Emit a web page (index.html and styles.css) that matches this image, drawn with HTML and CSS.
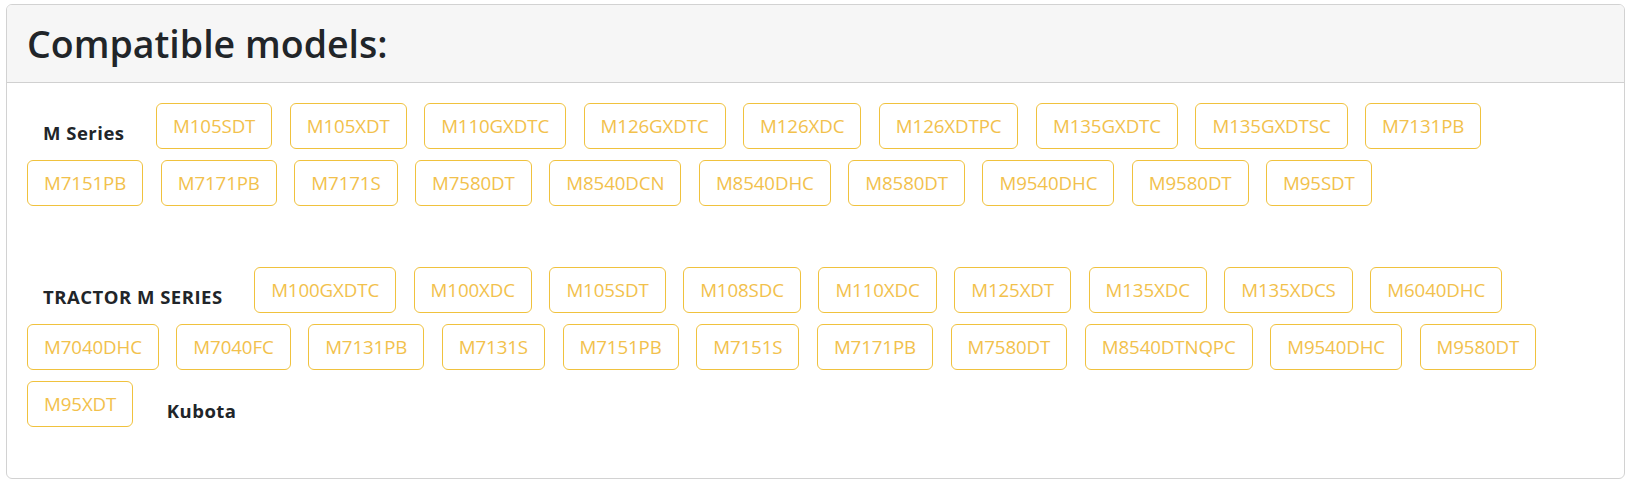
FILE: index.html
```html
<!DOCTYPE html>
<html lang="en">
<head>
<meta charset="utf-8">
<title>Compatible models</title>
<link rel="stylesheet" href="styles.css">
</head>
<body>
<div class="card">
  <div class="card-header">
    <h2 class="title">Compatible models:</h2>
  </div>
  <div class="card-body">
    <div class="group group-first">
      <strong class="series">M Series</strong>
      <a class="model">M105SDT</a>
      <a class="model">M105XDT</a>
      <a class="model">M110GXDTC</a>
      <a class="model">M126GXDTC</a>
      <a class="model">M126XDC</a>
      <a class="model">M126XDTPC</a>
      <a class="model">M135GXDTC</a>
      <a class="model">M135GXDTSC</a>
      <a class="model">M7131PB</a>
      <a class="model">M7151PB</a>
      <a class="model">M7171PB</a>
      <a class="model">M7171S</a>
      <a class="model">M7580DT</a>
      <a class="model">M8540DCN</a>
      <a class="model">M8540DHC</a>
      <a class="model">M8580DT</a>
      <a class="model">M9540DHC</a>
      <a class="model">M9580DT</a>
      <a class="model">M95SDT</a>
    </div>
    <div class="group">
      <strong class="series">TRACTOR M SERIES</strong>
      <a class="model">M100GXDTC</a>
      <a class="model">M100XDC</a>
      <a class="model">M105SDT</a>
      <a class="model">M108SDC</a>
      <a class="model">M110XDC</a>
      <a class="model">M125XDT</a>
      <a class="model">M135XDC</a>
      <a class="model">M135XDCS</a>
      <a class="model">M6040DHC</a>
      <a class="model">M7040DHC</a>
      <a class="model">M7040FC</a>
      <a class="model">M7131PB</a>
      <a class="model">M7131S</a>
      <a class="model">M7151PB</a>
      <a class="model">M7151S</a>
      <a class="model">M7171PB</a>
      <a class="model">M7580DT</a>
      <a class="model">M8540DTNQPC</a>
      <a class="model">M9540DHC</a>
      <a class="model">M9580DT</a>
      <a class="model">M95XDT</a>
      <strong class="series">Kubota</strong>
    </div>
  </div>
</div>
</body>
</html>
```
FILE: styles.css
```css
* {
  box-sizing: border-box;
}

body {
  margin: 4px 8px 0 6px;
  font-family: "Open Sans", "Noto Sans", "Liberation Sans", sans-serif;
  color: #212529;
  background: #ffffff;
}

.card {
  border: 1px solid #d2d2d2;
  border-radius: 6px;
  background: #ffffff;
  overflow: hidden;
}

.card-header {
  background: #f6f6f6;
  border-bottom: 1px solid #d0d0d0;
  height: 78px;
  padding: 0 20px;
  display: flex;
  align-items: center;
}

.title {
  margin: 0;
  font-size: 37.5px;
  font-weight: 600;
  line-height: 1.2;
  color: #212529;
}

.card-body {
  padding: 20px 20px 51px 20px;
}

.group {
  display: flex;
  flex-wrap: wrap;
  align-items: flex-start;
  column-gap: 17.5px;
  row-gap: 11px;
}

.group-first {
  margin-bottom: 61px;
}

.series {
  padding: 19px 14px 0 16px;
  font-size: 18.5px;
  font-weight: 700;
  line-height: 22px;
  letter-spacing: 0.5px;
  color: #212529;
}

.model {
  display: inline-block;
  height: 46px;
  padding: 0 16px;
  border: 1px solid #f0c23e;
  border-radius: 6px;
  color: #f2c14c;
  font-size: 18.7px;
  line-height: 44px;
  font-weight: 400;
  letter-spacing: -0.1px;
  text-decoration: none;
  white-space: nowrap;
}
```
